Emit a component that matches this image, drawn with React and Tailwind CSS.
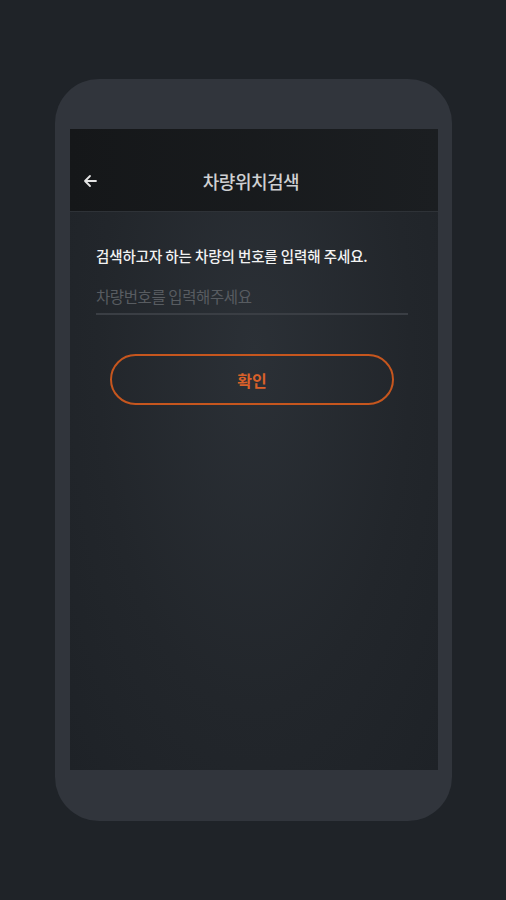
export default function App() {
  return (
    <div
      className="h-[900px] w-full bg-[#1f2328] pt-[79px] pl-[55px]"
      style={{ fontFamily: '"Noto Sans CJK KR", "Noto Sans", sans-serif' }}
    >
      {/* Phone frame */}
      <div className="w-[397px] h-[742px] rounded-[44px] bg-[#31353c] px-[15px] pt-[50px]">
        <div className="w-[368px] h-[641px] flex flex-col bg-[radial-gradient(ellipse_at_50%_35%,#2b3036_0%,#22262b_60%,#1e2227_100%)]">
          {/* Header */}
          <div className="relative h-[83px] flex items-end justify-center pb-[18px] pr-[6px] bg-[linear-gradient(90deg,#151719,#1b1e21)] border-b border-[#2e3237]">
            <svg
              className="absolute left-[12px] bottom-[22px]"
              width="16"
              height="16"
              viewBox="0 0 16 16"
              fill="none"
            >
              <path
                d="M14 8H3M8 3L3 8l5 5"
                stroke="#e5e5e5"
                strokeWidth="1.8"
                strokeLinecap="round"
                strokeLinejoin="round"
              />
            </svg>
            <span className="text-[18px] leading-[24px] font-medium text-[#cfd0d2] tracking-[-0.5px]">
              차량위치검색
            </span>
          </div>

          {/* Content */}
          <div className="pl-[26px] pr-[30px] pt-[34px]">
            <p className="text-[14.5px] font-medium text-[#f2f2f2] tracking-[-0.1px] leading-[20px]">
              검색하고자 하는 차량의 번호를 입력해 주세요.
            </p>
            <div className="mt-[20px] border-b-2 border-[#3a3e44] pb-[7px]">
              <span className="block text-[15.5px] text-[#585c61] tracking-[-0.4px] leading-[20px]">
                차량번호를 입력해주세요
              </span>
            </div>
            <div className="px-[14px] pt-[39px]">
              <button className="w-full h-[51px] rounded-full border-2 border-[#c6561e] flex items-center justify-center text-[16px] font-bold text-[#d9612a]">
                확인
              </button>
            </div>
          </div>
        </div>
      </div>
    </div>
  );
}
